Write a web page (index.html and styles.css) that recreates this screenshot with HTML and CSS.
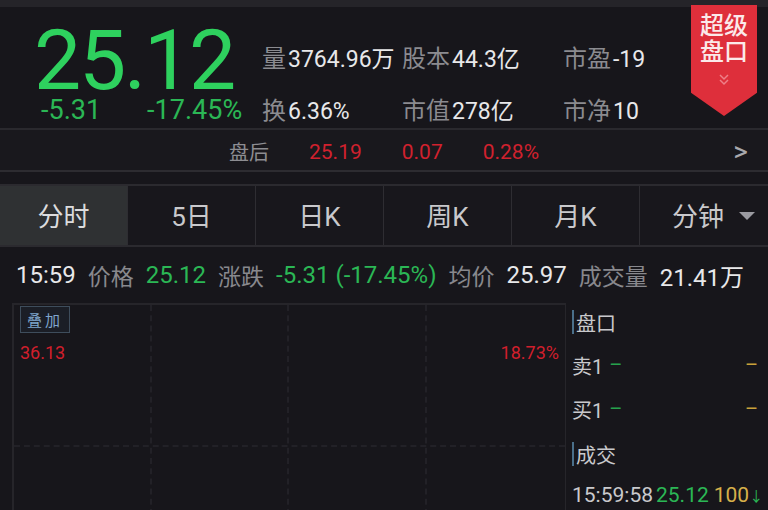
FILE: index.html
```html
<!DOCTYPE html>
<html lang="zh-CN">
<head>
<meta charset="utf-8">
<link rel="stylesheet" href="styles.css">
</head>
<body>
<div class="app">
  <div class="topstrip"></div>
  <header class="quote">
    <div class="price-col">
      <div class="big-price">25.12</div>
      <div class="changes"><span class="chg">-5.31</span><span class="pct">-17.45%</span></div>
    </div>
    <div class="stats">
      <div class="stat s1"><span class="lbl">量</span><span class="val">3764.96万</span></div>
      <div class="stat s2"><span class="lbl">股本</span><span class="val">44.3亿</span></div>
      <div class="stat s3"><span class="lbl">市盈</span><span class="val">-19</span></div>
      <div class="stat s1"><span class="lbl">换</span><span class="val">6.36%</span></div>
      <div class="stat s2"><span class="lbl">市值</span><span class="val">278亿</span></div>
      <div class="stat s3"><span class="lbl">市净</span><span class="val">10</span></div>
    </div>
    <div class="badge">
      <span class="badge-line">超级</span>
      <span class="badge-line">盘口</span>
      <svg class="badge-chev" width="14" height="14" viewBox="0 0 14 14"><path d="M3 2 L7 6 L11 2 M3 7 L7 11 L11 7" fill="none" stroke="#ee7f88" stroke-width="1.5"/></svg>
    </div>
  </header>
  <div class="after">
    <span class="after-lbl">盘后</span>
    <span class="after-v">25.19</span>
    <span class="after-v">0.07</span>
    <span class="after-v">0.28%</span>
    <span class="after-arrow">&gt;</span>
  </div>
  <nav class="tabs">
    <div class="tab active">分时</div>
    <div class="tab">5日</div>
    <div class="tab">日K</div>
    <div class="tab">周K</div>
    <div class="tab">月K</div>
    <div class="tab">分钟<svg class="caret" width="18" height="10" viewBox="0 0 18 10"><path d="M1 1 L17 1 L9 9 Z" fill="#9a9aa0"/></svg></div>
  </nav>
  <div class="info">
    <span class="w">15:59</span><span class="g">价格</span><span class="gr">25.12</span><span class="g">涨跌</span><span class="gr">-5.31 (-17.45%)</span><span class="g">均价</span><span class="w">25.97</span><span class="g">成交量</span><span class="w">21.41万</span>
  </div>
  <div class="bottom">
    <div class="chart">
      <div class="grid">
        <div class="vline vl1"></div>
        <div class="vline vl2"></div>
        <div class="vline vl3"></div>
        <div class="hline"></div>
      </div>
      <div class="chart-top">
        <span class="overlay">叠加</span>
      </div>
      <div class="chart-labels">
        <span class="red">36.13</span>
        <span class="red">18.73%</span>
      </div>
    </div>
    <aside class="book">
      <div class="sec"><span class="bar"></span>盘口</div>
      <div class="row"><span class="k">卖1</span><span class="dash g1">–</span><span class="dash o1">–</span></div>
      <div class="row"><span class="k">买1</span><span class="dash g1">–</span><span class="dash o1">–</span></div>
      <div class="sec"><span class="bar"></span>成交</div>
      <div class="trade"><span class="t">15:59:58</span><span class="tp">25.12</span><span class="tv">100</span><span class="ta">↓</span></div>
    </aside>
  </div>
</div>
</body>
</html>
```

FILE: styles.css
```css
* { box-sizing: border-box; margin: 0; padding: 0; }
html, body { background: #17161b; }
body {
  width: 768px; height: 510px; overflow: hidden;
  font-family: Roboto, "Noto Sans CJK SC", sans-serif;
  color: #e4e4e6;
}
.app { width: 768px; height: 510px; display: flex; flex-direction: column; }
.topstrip { height: 7px; background: #252429; flex: none; }

.quote {
  height: 123px; flex: none;
  display: flex; position: relative;
  border-bottom: 2px solid #2a292e;
}
.price-col { width: 255px; padding-left: 34px; display: flex; flex-direction: column; }
.big-price {
  font-size: 84px; line-height: 68px; color: #2ed15e;
  margin-top: 20px; letter-spacing: -2.2px;
}
.changes { display: flex; font-size: 27px; color: #2bb755; padding-left: 7px; line-height: 34px; margin-top: -2px; }
.changes .pct { margin-left: 46px; }

.stats {
  display: grid; grid-template-columns: 140px 161px 110px;
  grid-auto-rows: 52px; padding-top: 37px; padding-left: 7px;
  font-size: 23px; line-height: 26px;
}
.stat { white-space: nowrap; }
.lbl { color: #8b8b90; font-family: "Noto Sans CJK SC", sans-serif; margin-right: 2px; font-size: 24px; }
.val { color: #e8e8ea; }

.badge {
  position: absolute; right: 11px; top: -2px;
  width: 66px; height: 111px;
  background: #de2f3b;
  clip-path: polygon(0 0, 100% 0, 100% 79%, 50% 100%, 0 79%);
  display: flex; flex-direction: column; align-items: center;
  padding-top: 6px;
}
.badge-line {
  font-family: "Noto Sans CJK SC", sans-serif; font-size: 24px; line-height: 26px;
  height: 26px; color: #fbe9ea; font-weight: 500;
}
.badge-chev { margin-top: 10px; }

.after {
  height: 42px; flex: none; display: flex; align-items: center;
  border-bottom: 2px solid #2d2c31; background: #19181d;
  font-size: 21px; padding-top: 3px; gap: 40px;
}
.after-lbl { font-family: "Noto Sans CJK SC", sans-serif; color: #8d8d92; margin-left: 229px; font-size: 20px; }
.after-v { color: #d0212e; }
.after-arrow { margin-left: auto; margin-right: 20px; color: #a9a9ad; font-size: 28px; line-height: 28px; }

.tabs {
  margin-top: 12px; height: 63px; flex: none; display: flex;
  border-top: 2px solid #2b2a2f; border-bottom: 2px solid #2b2a2f;
  background: #18171c;
}
.tab {
  width: 128px; display: flex; align-items: center; justify-content: center;
  font-size: 26px; color: #c9c9cc; padding-bottom: 3px;
  border-right: 1px solid #2e2d32;
}
.tab:last-child { border-right: none; flex: 1; justify-content: flex-end; padding-right: 12px; }
.tab.active { background: #2f3133; color: #dcdcde; }
.caret { margin-left: 14px; margin-top: 3px; }

.info {
  height: 56px; flex: none; display: flex; align-items: center;
  padding-left: 16px; font-size: 24px; gap: 12px; white-space: nowrap;
}
.info .w { color: #e8e8ea; }
.info .g { color: #88888d; font-family: "Noto Sans CJK SC", sans-serif; font-size: 23px; }
.info .gr { color: #2bb755; }

.bottom { flex: 1; display: flex; }
.chart {
  width: 554px; margin-left: 12px; position: relative;
  border-left: 2px solid #26252a; border-top: 2px solid #26252a;
  border-right: 1px solid #26252a;
}
.grid { position: absolute; inset: 0; }
.vline { position: absolute; top: 0; bottom: 0; width: 0; border-left: 2px dashed #222127; }
.vl1 { left: 136px; }
.vl2 { left: 273px; }
.vl3 { left: 411px; }
.hline { position: absolute; left: 0; right: 0; top: 140px; height: 0; border-top: 2px dashed #222127; }
.chart-top { position: relative; padding: 1px 0 0 6px; height: 33px; }
.overlay {
  display: inline-block; border: 1px solid #3e4d5c; color: #7fa6cc;
  font-family: "Noto Sans CJK SC", sans-serif; font-size: 15px; line-height: 25px;
  padding: 0 6px; letter-spacing: 3px; background: #1b1e26;
}
.chart-labels {
  position: relative; display: flex; justify-content: space-between;
  padding: 0 6px 0 6px; font-size: 18px; line-height: 24px; margin-top: 3px;
}
.red { color: #d11f2c; }

.book { flex: 1; padding-left: 6px; font-size: 20px; }
.sec {
  display: flex; align-items: center; height: 42px; color: #c9c9cc;
  font-family: "Noto Sans CJK SC", sans-serif; margin-top: 2px;
}
.book .sec:first-child { margin-top: -2px; }
.sec .bar { width: 2px; height: 24px; background: #4a6f8a; margin-right: 2px; }
.row { display: flex; align-items: center; height: 44px; color: #c9c9cc; }
.dash.g1 { color: #26a24d; margin-left: 6px; }
.dash.o1 { color: #c9a13a; margin-left: auto; margin-right: 10px; }
.trade { display: flex; align-items: center; height: 40px; white-space: nowrap; font-size: 21px; }
.trade .t { color: #c9c9cc; margin-right: 3px; }
.trade .tp { color: #2bb755; margin-right: 5px; }
.trade .tv { color: #d6b04a; }
.trade .ta { color: #2bb755; font-size: 14px; }
```
